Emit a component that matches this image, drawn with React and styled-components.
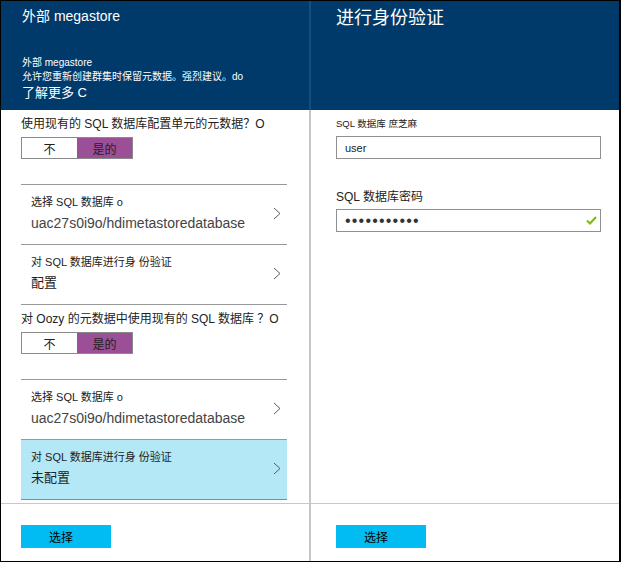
import React from 'react';
import styled, { createGlobalStyle, css } from 'styled-components';

const Global = createGlobalStyle`
  html, body { margin: 0; padding: 0; background: #fff; }
  body {
    font-family: "Liberation Sans", "Noto Sans CJK SC", sans-serif;
    color: #222;
  }
  *, *::before, *::after { box-sizing: border-box; }
`;

const Frame = styled.div`
  width: 621px;
  height: 562px;
  border: 1px solid #000;
  border-right-width: 2px;
  display: grid;
  grid-template-columns: 310px 1fr;
  background: #fff;
  overflow: hidden;
`;

const Header = styled.header`
  flex: none;
  height: 109px;
  background: #003a6b;
  color: #fff;
  padding: 5px 0 0 ${(p) => p.$inset}px;
`;

const BladeTitle = styled.h1`
  margin: 0;
  font-weight: 400;
  font-size: ${(p) => p.$size}px;
  line-height: ${(p) => p.$lh}px;
  white-space: nowrap;
`;

const Intro = styled.div`
  margin-top: 30px;
  font-size: 10px;
  line-height: 14px;
  white-space: nowrap;
`;

const LearnMore = styled.a`
  display: block;
  color: #fff;
  text-decoration: none;
  font-size: 13px;
  line-height: 17px;
`;

const Body = styled.div`
  flex: 1;
  min-height: 0;
  padding: ${(p) => p.$pad};
`;

const Footer = styled.footer`
  flex: none;
  height: 58px;
  border-top: 1px solid #c8c8c8;
  padding: 21px 0 0 ${(p) => p.$inset}px;
`;

const Panel = styled.section`
  display: flex;
  flex-direction: column;
  min-width: 0;
  ${(p) =>
    p.$divided &&
    css`
      & > * { border-right: 2px solid #c6c6c6; }
      & > ${Header} { border-right-color: #134d82; }
    `}
`;

const List = styled.div`
  display: flex;
  flex-direction: column;
  & > * + * { border-top: 1px solid #999; }
`;

const Question = styled.div`
  padding: 6px 0 25px;
`;

const QuestionText = styled.div`
  font-size: 12px;
  line-height: 17px;
  color: #222;
  white-space: nowrap;
`;

const Toggle = styled.div`
  margin-top: 4px;
  display: grid;
  grid-template-columns: 55px 55px;
  width: 112px;
  height: 22px;
  border: 1px solid #8a8a8a;
`;

const ToggleOption = styled.div`
  display: flex;
  align-items: center;
  justify-content: center;
  font-size: 12px;
  color: #222;
  background: ${(p) => (p.$active ? '#9b4f96' : '#fff')};
`;

const Row = styled.div`
  display: flex;
  align-items: flex-start;
  height: ${(p) => (p.$selected ? 61 : 60)}px;
  padding: 0 6px 0 10px;
  background: ${(p) => (p.$selected ? '#b4e8f7' : 'transparent')};
  ${(p) => p.$selected && css`border-bottom: 1px solid #8a8a8a;`}
`;

const RowText = styled.div`
  padding-top: 10px;
  display: flex;
  flex-direction: column;
  gap: 5px;
`;

const RowCaption = styled.div`
  font-size: 11px;
  line-height: 14px;
  color: #222;
  white-space: nowrap;
`;

const RowValue = styled.div`
  font-size: ${(p) => p.$size}px;
  line-height: 18px;
  color: ${(p) => p.$color};
  white-space: nowrap;
`;

const Chevron = styled.svg`
  flex: none;
  margin-left: auto;
  align-self: center;
  margin-top: -2px;
`;

const Field = styled.div`
  margin-top: ${(p) => p.$gap}px;
`;

const FieldLabel = styled.div`
  font-size: ${(p) => p.$size}px;
  line-height: ${(p) => p.$lh}px;
  margin-bottom: ${(p) => p.$mb}px;
  color: #222;
  white-space: nowrap;
`;

const InputBox = styled.div`
  height: 23px;
  border: 1px solid #8f8f8f;
  display: flex;
  align-items: center;
  padding: 0 3px 0 8px;
  font-size: 11px;
  color: #222;
  background: #fff;
`;

const Dots = styled.span`
  font-family: "Liberation Sans", sans-serif;
  font-size: 16px;
  letter-spacing: 1.2px;
  color: #333;
  line-height: 1;
`;

const CheckIcon = styled.svg`
  flex: none;
  margin-left: auto;
`;

const PrimaryButton = styled.button`
  width: 90px;
  height: 23px;
  border: 0;
  margin: 0;
  background: #00bcf2;
  color: #000;
  font-family: "Liberation Sans", "Noto Sans CJK SC", sans-serif;
  font-size: 12px;
  text-align: left;
  padding: 0 0 0 28px;
  cursor: pointer;
`;

const ChevronIcon = () => (
  <Chevron width="8" height="13" viewBox="0 0 8 13">
    <polyline points="1,1 7,6.5 1,12" fill="none" stroke="#5a5a5a" strokeWidth="1" />
  </Chevron>
);

const DbRow = ({ caption, value, size = 14, color = '#444', selected }) => (
  <Row $selected={selected}>
    <RowText>
      <RowCaption>{caption}</RowCaption>
      <RowValue $size={size} $color={color}>{value}</RowValue>
    </RowText>
    <ChevronIcon />
  </Row>
);

const YesNo = () => (
  <Toggle>
    <ToggleOption>不</ToggleOption>
    <ToggleOption $active>是的</ToggleOption>
  </Toggle>
);

export default function App() {
  return (
    <>
      <Global />
      <Frame>
        <Panel $divided>
          <Header $inset={21}>
            <BladeTitle $size={14} $lh={20}>外部 megastore</BladeTitle>
            <Intro>
              <div>外部 megastore</div>
              <div>允许您重新创建群集时保留元数据。强烈建议。do</div>
              <LearnMore href="#">了解更多 C</LearnMore>
            </Intro>
          </Header>
          <Body $pad="0 22px 0 20px">
            <List>
              <Question>
                <QuestionText>使用现有的 SQL 数据库配置单元的元数据？O</QuestionText>
                <YesNo />
              </Question>
              <DbRow caption="选择 SQL 数据库 o" value="uac27s0i9o/hdimetastoredatabase" />
              <DbRow caption="对 SQL 数据库进行身 份验证" value="配置" size={13} color="#222" />
              <Question>
                <QuestionText>对 Oozy 的元数据中使用现有的 SQL 数据库 ？O</QuestionText>
                <YesNo />
              </Question>
              <DbRow caption="选择 SQL 数据库 o" value="uac27s0i9o/hdimetastoredatabase" />
              <DbRow caption="对 SQL 数据库进行身 份验证" value="未配置" size={13} color="#222" selected />
            </List>
          </Body>
          <Footer $inset={20}>
            <PrimaryButton>选择</PrimaryButton>
          </Footer>
        </Panel>
        <Panel>
          <Header $inset={25}>
            <BladeTitle $size={18} $lh={24}>进行身份验证</BladeTitle>
          </Header>
          <Body $pad="8px 18px 0 25px">
            <Field $gap={0}>
              <FieldLabel $size={9.5} $lh={12} $mb={6}>SQL 数据库 庶芝麻</FieldLabel>
              <InputBox>user</InputBox>
            </Field>
            <Field $gap={31}>
              <FieldLabel $size={12} $lh={15} $mb={4}>SQL 数据库密码</FieldLabel>
              <InputBox>
                <Dots>•••••••••••</Dots>
                <CheckIcon width="11" height="9" viewBox="0 0 11 9">
                  <polyline points="1,4.5 4,7.5 10,1" fill="none" stroke="#7fba00" strokeWidth="2" />
                </CheckIcon>
              </InputBox>
            </Field>
          </Body>
          <Footer $inset={25}>
            <PrimaryButton>选择</PrimaryButton>
          </Footer>
        </Panel>
      </Frame>
    </>
  );
}
